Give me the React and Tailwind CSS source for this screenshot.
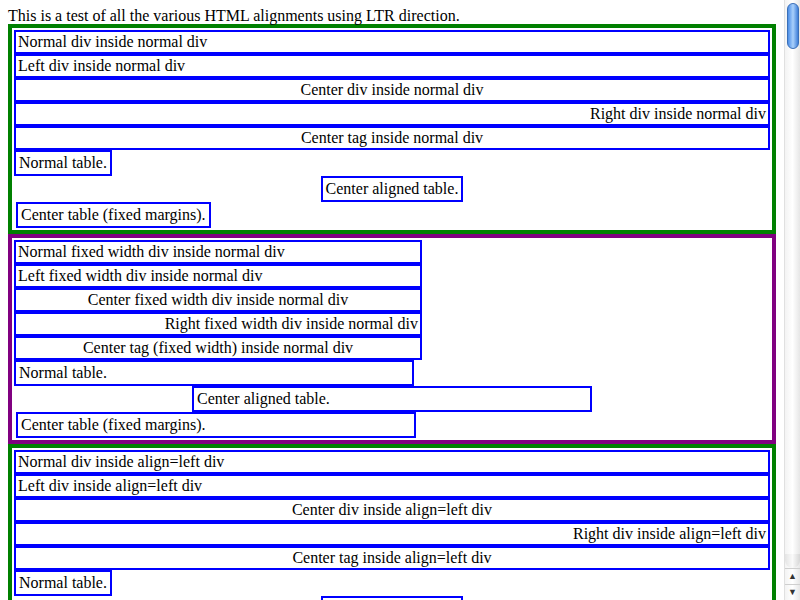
const rowCls = "border-2 border-[#0000ff] px-[2px] py-px leading-[18px]";
const tblCls = "border-2 border-[#0000ff] p-[3px] leading-[16px]";

const Section = ({ color, fixed, label }) => {
	const w = fixed ? "w-[408px]" : "w-full";
	const tw = fixed ? "w-[400px]" : "w-fit";
	const kind = fixed ? "fixed width div" : "div";
	return (
		<div className={`border-4 ${color} p-[2px]`}>
			<div className={`${rowCls} ${w}`}>Normal {kind} inside {label}</div>
			<div className={`${rowCls} ${w} text-left`}>Left {kind} inside {label}</div>
			<div className={`${rowCls} ${w} text-center`}>Center {kind} inside {label}</div>
			<div className={`${rowCls} ${w} text-right`}>Right {kind} inside {label}</div>
			<div className={`${rowCls} ${w} text-center`}>
				{fixed ? `Center tag (fixed width) inside ${label}` : `Center tag inside ${label}`}
			</div>
			<div className={`${tblCls} ${tw}`}>Normal table.</div>
			<div className={`${tblCls} ${tw} mx-auto`}>Center aligned table.</div>
			<div className={`${tblCls} ${tw} ml-[2px]`}>Center table (fixed margins).</div>
		</div>
	);
};

export default function App() {
	return (
		<div className="flex h-[600px] w-[800px] overflow-hidden bg-white text-black text-[16px]" style={{ fontFamily: '"Liberation Serif", "Times New Roman", serif' }}>
			<div className="flex-1 overflow-hidden px-2 pt-2">
				<div className="leading-[16px]">This is a test of all the various HTML alignments using LTR direction.</div>
				<Section color="border-[#008000]" label="normal div" />
				<Section color="border-[#800080]" fixed label="normal div" />
				<Section color="border-[#008000]" label="align=left div" />
			</div>
			<div className="flex w-4 flex-col bg-gradient-to-r from-[#f3f3f3] via-white to-[#e6e6e6] border-l border-[#e0e0e0]">
				<div className="mx-auto mt-[3px] h-[46px] w-3 rounded-full border border-[#3a6fb8] bg-gradient-to-r from-[#4c8ee6] via-[#a9d0fb] to-[#3f7fd8]"></div>
				<div className="flex-1"></div>
				<div className="h-[14px] rounded-b-full bg-gradient-to-r from-[#e4e4e4] via-[#fafafa] to-[#d6d6d6]"></div>
				<div className="flex h-4 items-center justify-center border-t border-[#cfcfcf] text-[9px] leading-none text-[#333]">▲</div>
				<div className="flex h-4 items-center justify-center border-t border-[#cfcfcf] text-[9px] leading-none text-[#333]">▼</div>
			</div>
		</div>
	);
}
